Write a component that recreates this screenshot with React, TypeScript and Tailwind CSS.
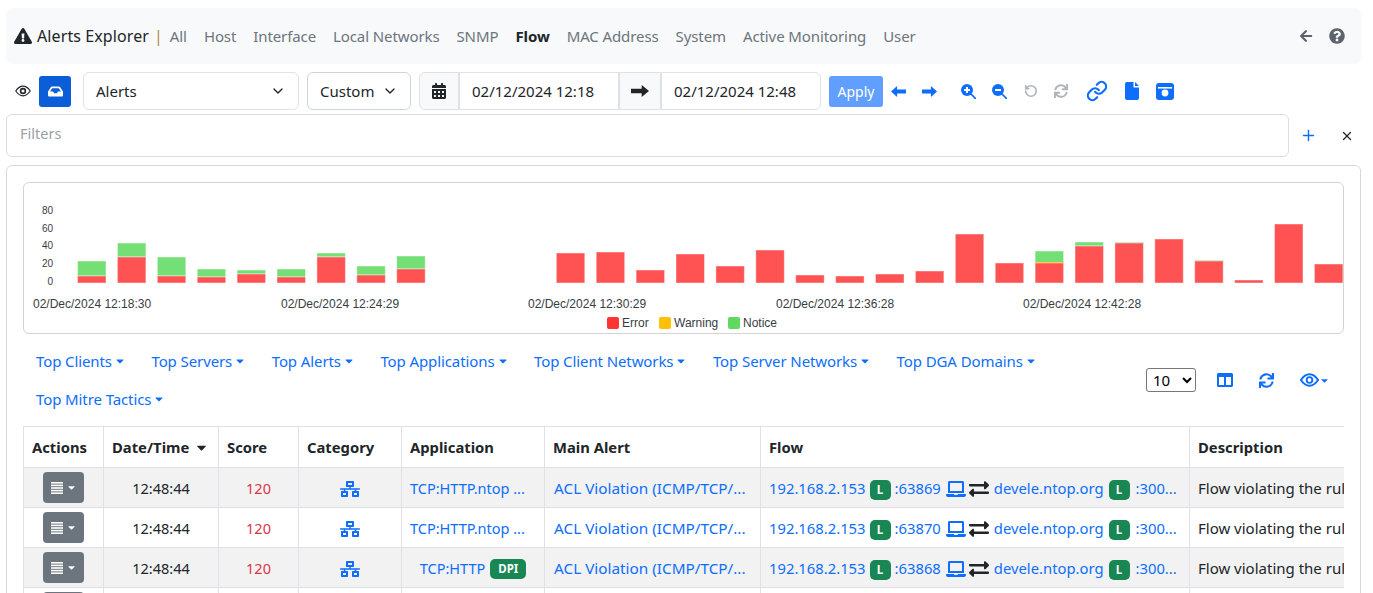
import {
  FaExclamationTriangle, FaInbox, FaCalendarAlt, FaSync, FaColumns,
  FaNetworkWired, FaLaptop, FaExchangeAlt, FaQuestionCircle, FaArrowLeft, FaCaretDown,
} from 'react-icons/fa';
import { ChevronDown, Link, Plus, RotateCcw, X } from 'lucide-react';

const navItems = ['All', 'Host', 'Interface', 'Local Networks', 'SNMP', 'Flow', 'MAC Address', 'System', 'Active Monitoring', 'User'];
const topLinks = ['Top Clients', 'Top Servers', 'Top Alerts', 'Top Applications', 'Top Client Networks', 'Top Server Networks', 'Top DGA Domains', 'Top Mitre Tactics'];

// [total top y, red top y] in page pixels, null for empty slots
const bars: ([number, number] | null)[] = [
  [261, 276], [243, 257], [257, 276], [269, 277], [270, 274], [269, 277], [253, 257], [266, 275], [256, 269],
  null, null, null,
  [253, 253], [252, 252], [270, 270], [254, 254], [266, 266], [250, 250], [275, 275], [276, 276], [274, 274], [271, 271],
  [234, 234], [263, 263], [251, 263], [242, 246], [242, 243], [239, 239], [260, 261], [280, 280], [224, 224], [264, 264],
];

const BASE = 283;

const AlertsChart = () => (
  <svg width="1319" height="150" viewBox="24 183 1319 150" className="block">
    {[['80', 214], ['60', 232], ['40', 249], ['20', 267], ['0', 285]].map(([t, y]) => (
      <text key={t} x="53" y={y} textAnchor="end" fontSize="10" fontFamily="Liberation Sans" fill="#373d3f">{t}</text>
    ))}
    {bars.map((b, i) => {
      if (!b) return null;
      const x = 77.5 + 39.9 * i;
      const w = 28.5;
      return (
        <g key={i} stroke="#ffffff" strokeOpacity="0.45">
          {b[0] < b[1] && <rect x={x} y={b[0]} width={w} height={b[1] - b[0]} fill="#74df74" />}
          {i === 24 && <rect x={x} y={262} width={w} height={1} fill="#ffc107" stroke="none" />}
          <rect x={x} y={b[1]} width={w} height={BASE - b[1]} fill="#ff5252" />
        </g>
      );
    })}
    {[['02/Dec/2024 12:18:30', 33], ['02/Dec/2024 12:24:29', 281], ['02/Dec/2024 12:30:29', 528], ['02/Dec/2024 12:36:28', 776], ['02/Dec/2024 12:42:28', 1023]].map(([t, x]) => (
      <text key={t} x={x} y="308" fontSize="12" fontFamily="Liberation Sans" fill="#373d3f">{t}</text>
    ))}
    {[['Error', 607, '#ff3333'], ['Warning', 659, '#ffc107'], ['Notice', 728, '#5fd95f']].map(([t, x, c]) => (
      <g key={t as string}>
        <rect x={x} y="317" width="12" height="12" rx="2" fill={c as string} />
        <text x={(x as number) + 15} y="327" fontSize="12" fontFamily="Liberation Sans" fill="#373d3f">{t}</text>
      </g>
    ))}
  </svg>
);

const Arrow = ({ w, h, left, className }: { w: number; h: number; left?: boolean; className?: string }) => (
  <svg width={w} height={h} viewBox="0 0 16 10" preserveAspectRatio="none" className={className} fill="currentColor">
    <path d={left ? 'M16 3.2H6.5V0L0 5l6.5 5V6.8H16z' : 'M0 3.2h9.5V0L16 5l-6.5 5V6.8H0z'} />
  </svg>
);

const ZoomIcon = ({ plus, className }: { plus?: boolean; className?: string }) => (
  <svg width="15" height="15" viewBox="0 0 15 15" className={className}>
    <circle cx="6" cy="6" r="6" fill="currentColor" />
    <path d="M10 10l4.3 4.3" stroke="currentColor" strokeWidth="1.7" strokeLinecap="round" />
    <rect x="3" y="5" width="6" height="2" fill="#fff" />
    {plus && <rect x="5" y="3" width="2" height="6" fill="#fff" />}
  </svg>
);

const FileIcon = ({ className }: { className?: string }) => (
  <svg width="14" height="18" viewBox="0 0 14 18" className={className} fill="currentColor">
    <path d="M0 2a2 2 0 012-2h6.5v5.5H14V16a2 2 0 01-2 2H2a2 2 0 01-2-2z" />
    <path d="M10 0l4 4h-4z" />
  </svg>
);

const SnapshotIcon = ({ className }: { className?: string }) => (
  <svg width="18" height="17" viewBox="0 0 18 17" className={className}>
    <rect width="18" height="17" rx="3" fill="currentColor" />
    <rect x="2" y="4" width="14" height="1.6" fill="#fff" />
    <circle cx="9" cy="10" r="3.4" fill="#fff" />
    <rect x="7" y="0" width="6" height="4" fill="currentColor" />
  </svg>
);

const EyeIcon = ({ w, h, sw, r, className }: { w: number; h: number; sw: number; r: number; className?: string }) => (
  <svg width={w} height={h} viewBox="0 0 20 14" className={className}>
    <path d="M1 7c3-4.500 6-6 9-6s6 1.500 9 6c-3 4.500-6 6-9 6s-6-1.500-9-6z" fill="none" stroke="currentColor" strokeWidth={sw} />
    <circle cx="10" cy="7" r={r} fill="none" stroke="currentColor" strokeWidth="2" />
  </svg>
);

const MenuIcon = () => (
  <svg width="12" height="12" viewBox="0 0 12 12" fill="#fff">
    <rect y="0" width="12" height="1.600" />
    <rect y="2.600" width="12" height="1.600" />
    <rect y="5.200" width="12" height="1.600" />
    <rect y="7.800" width="12" height="1.600" />
    <rect y="10.400" width="12" height="1.600" />
  </svg>
);

const Badge = ({ children }: { children: string }) => (
  <span className="inline-flex h-[20px] w-[21px] shrink-0 items-center justify-center rounded-[5px] bg-[#198754] text-[11.5px] font-bold leading-none text-white">
    {children}
  </span>
);

const rows = [
  { app: 'TCP:HTTP.ntop ...', dpi: false, port: ':63869', striped: true },
  { app: 'TCP:HTTP.ntop ...', dpi: false, port: ':63870', striped: false },
  { app: 'TCP:HTTP', dpi: true, port: ':63868', striped: true },
  { app: 'TCP:HTTP.ntop ...', dpi: false, port: ':63867', striped: false },
];

const td = 'h-[40px] border border-[#dee2e6] px-2 pt-[2px] pb-0 text-[14.5px] whitespace-nowrap overflow-hidden';
const th = 'h-[41px] border border-[#dee2e6] px-2 py-0 text-left text-[14.8px] font-bold whitespace-nowrap';

const App = () => {
  return (
    <div className="h-[593px] w-[1373px] overflow-hidden bg-white pl-[6px] pr-[12px] pt-2 text-[#212529] [font-family:'Noto_Sans',sans-serif]">
      <nav className="flex h-[56px] items-center rounded-[6px] bg-[#f8f9fa] pl-[8px] pr-[16px]">
        <FaExclamationTriangle className="text-[18px] text-[#212529]" />
        <span className="ml-[5px] text-[16px] tracking-[0.1px]">Alerts Explorer</span>
        <span className="ml-[5px] text-[16px] text-[#b08a3c]">|</span>
        <ul className="ml-[7px] flex gap-[17px] text-[15px] tracking-[-0.1px] text-[#6c757d]">
          {navItems.map((n) => (
            <li key={n} className={n === 'Flow' ? 'font-bold text-[#212529]' : ''}>{n}</li>
          ))}
        </ul>
        <div className="ml-auto flex items-center gap-[16px] text-[#5c636a]">
          <FaArrowLeft className="text-[14px]" />
          <FaQuestionCircle className="text-[16px]" />
        </div>
      </nav>

      <div className="mt-2 flex h-[38px] items-center">
        <EyeIcon w={16} h={12} sw={1.5} r={3} className="ml-[9px] text-[#212529]" />
        <button className="ml-[8px] flex h-[31px] w-[32px] items-center justify-center rounded-[3px] bg-[#0b5ed7] text-white">
          <FaInbox className="text-[15px]" />
        </button>
        <div className="ml-[12px] flex h-[38px] w-[216px] items-center justify-between rounded-[6px] border border-[#dee2e6] pl-[12px] pr-[12px] text-[15px]">
          Alerts <ChevronDown size={16} strokeWidth={2} />
        </div>
        <div className="ml-[8px] flex h-[38px] w-[104px] items-center justify-between rounded-[6px] border border-[#ced4da] pl-[12px] pr-[12px] text-[15px]">
          Custom <ChevronDown size={16} strokeWidth={2} />
        </div>
        <div className="ml-[8px] flex h-[38px] w-[40px] items-center justify-center rounded-l-[6px] border border-[#dee2e6] bg-[#f8f9fa]">
          <FaCalendarAlt className="text-[16px]" />
        </div>
        <div className="flex h-[38px] w-[160px] items-center border border-[#dee2e6] pl-[12px] text-[15px]">02/12/2024 12:18</div>
        <div className="flex h-[38px] w-[42px] items-center justify-center border border-[#dee2e6] bg-[#f8f9fa]">
          <Arrow w={18} h={12} />
        </div>
        <div className="flex h-[38px] w-[160px] items-center rounded-r-[6px] border border-[#dee2e6] pl-[12px] text-[15px]">02/12/2024 12:48</div>
        <button className="ml-[8px] h-[31px] w-[54px] rounded-[3px] bg-[#609fff] text-[14px] text-white">Apply</button>
        <div className="flex items-center text-[#0d6efd]">
          <Arrow left w={15} h={11} className="ml-[8px]" />
          <Arrow w={15} h={11} className="ml-[16px]" />
          <ZoomIcon plus className="ml-[24px]" />
          <ZoomIcon className="ml-[16px]" />
          <RotateCcw size={14} strokeWidth={2.8} className="ml-[17px] text-[#adb5bd]" />
          <FaSync className="ml-[16px] text-[14px] text-[#adb5bd]" />
          <Link size={22} strokeWidth={2.4} className="ml-[18px]" />
          <FileIcon className="ml-[17px]" />
          <SnapshotIcon className="ml-[17px]" />
        </div>
      </div>

      <div className="mt-[4px] flex h-[43px] items-center">
        <div className="flex h-[43px] w-[1283px] items-center rounded-[6px] border border-[#dcdcdc] pb-[3px] pl-[13px] text-[14.5px] text-[#9aa0a6]">Filters</div>
        <Plus size={17} strokeWidth={2} className="ml-[11px] text-[#0d6efd]" />
        <X size={14} strokeWidth={2.2} className="ml-[23px] text-[#212529]" />
      </div>

      <div className="mt-2 h-[500px] rounded-[6px] border border-[#d8d8d8] p-4">
        <div className="h-[152px] overflow-hidden rounded-[6px] border border-[#d4d4d4]">
          <AlertsChart />
        </div>

        <div className="mt-[8px] flex h-[84px] items-start">
          <div className="flex w-[1123px] flex-wrap gap-x-[25.5px] pl-[13px] text-[15px] tracking-[-0.1px] leading-[38px] text-[#0d6efd]">
            {topLinks.map((t) => (
              <span key={t} className="inline-flex items-center gap-[2px]">
                {t}<FaCaretDown className="text-[12px]" />
              </span>
            ))}
          </div>
          <div className="mt-[26px] flex items-center">
            <select defaultValue="10" className="h-[24px] w-[50px] rounded-[3px] border border-[#767676] bg-white pl-[2px] text-[15px] text-black">
              <option>10</option>
            </select>
            <FaColumns className="ml-[21px] text-[16px] text-[#0d6efd]" />
            <FaSync className="ml-[26px] text-[15px] text-[#0d6efd]" />
            <EyeIcon w={19} h={14} sw={2.2} r={3} className="ml-[26px] text-[#0d6efd]" />
            <FaCaretDown className="text-[11px] text-[#0d6efd]" />
          </div>
        </div>

        <div className="w-[1321px] overflow-hidden">
          <table className="w-[1500px] table-fixed border-collapse">
            <colgroup>
              <col className="w-[80px]" />
              <col className="w-[115px]" />
              <col className="w-[80px]" />
              <col className="w-[103px]" />
              <col className="w-[143px]" />
              <col className="w-[216px]" />
              <col className="w-[429px]" />
              <col className="w-[334px]" />
            </colgroup>
            <thead>
              <tr>
                <th className={th}>Actions</th>
                <th className={th}>
                  <span className="flex items-center gap-[5px]">Date/Time <FaCaretDown className="text-[15px]" /></span>
                </th>
                <th className={th}>Score</th>
                <th className={th}>Category</th>
                <th className={th}>Application</th>
                <th className={th}>Main Alert</th>
                <th className={th}>Flow</th>
                <th className={th}>Description</th>
              </tr>
            </thead>
            <tbody>
              {rows.map((r) => (
                <tr key={r.port} className={r.striped ? 'bg-[#f2f2f2]' : 'bg-white'}>
                  <td className={`${td} !pt-0`}>
                    <button className="mx-auto flex h-[31px] w-[41px] items-center justify-center gap-[3px] rounded-[4px] bg-[#6c757d] text-white">
                      <MenuIcon /><FaCaretDown className="text-[11px]" />
                    </button>
                  </td>
                  <td className={`${td} text-center`}>12:48:44</td>
                  <td className={`${td} text-center text-[#dc3545]`}>120</td>
                  <td className={td}><FaNetworkWired className="mx-auto text-[20px] text-[#0d6efd]" /></td>
                  <td className={`${td} text-[#0d6efd]`}>
                    {r.dpi ? (
                      <span className="flex items-center justify-center gap-[5px]">
                        TCP:HTTP
                        <span className="rounded-[5px] bg-[#198754] px-[8px] py-[3px] text-[11.5px] font-bold leading-[14px] text-white">DPI</span>
                      </span>
                    ) : r.app}
                  </td>
                  <td className={`${td} pl-[9px] !text-[15.3px] text-[#0d6efd]`}>ACL Violation (ICMP/TCP/...</td>
                  <td className={`${td} !text-[14.8px] text-[#0d6efd]`}>
                    <span className="flex items-center">
                      192.168.2.153
                      <span className="ml-[4px]"><Badge>L</Badge></span>
                      <span className="ml-[4px]">{r.port}</span>
                      <FaLaptop className="ml-[5px] text-[20px]" />
                      <FaExchangeAlt className="ml-[3px] text-[20px] text-[#212529]" />
                      <span className="ml-[5px]">devele.ntop.org</span>
                      <span className="ml-[5px]"><Badge>L</Badge></span>
                      <span className="ml-[6px]">:300...</span>
                    </span>
                  </td>
                  <td className={`${td} !text-[15px]`}>Flow violating the rules configured</td>
                </tr>
              ))}
            </tbody>
          </table>
        </div>
      </div>
    </div>
  );
};

export default App;
